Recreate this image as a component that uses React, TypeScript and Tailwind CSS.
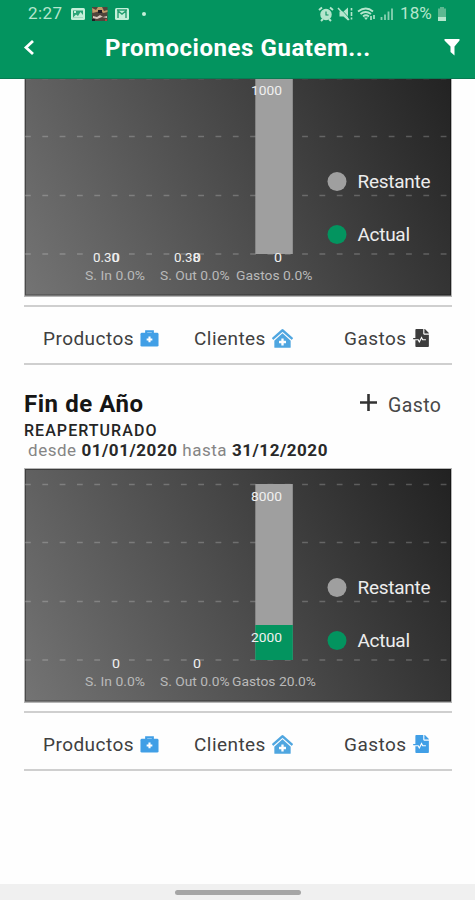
import * as React from "react"
import { FaClinicMedical, FaFileMedicalAlt } from "react-icons/fa"
import clsx from "clsx"

interface Label {
  text: string
  x: number
  y: number
  width: number
  axis?: boolean
}

interface ChartProps {
  id: string
  actualHeight: number
  labels: Label[]
}

const GRID_LINES = [16.5, 74.5, 133.5, 192]

const Chart = ({ id, actualHeight, labels }: ChartProps) => (
  <svg className="block h-[235px] w-[428px] shrink-0" viewBox="0 0 428 235">
    <defs>
      <linearGradient id={id} gradientUnits="userSpaceOnUse" x1="0" y1="235" x2="428" y2="0">
        <stop offset="0" stopColor="#747474" />
        <stop offset="1" stopColor="#212121" />
      </linearGradient>
    </defs>
    <rect width="428" height="235" fill="#b5b5b5" />
    <rect x="1" y="1" width="426" height="232.5" fill={`url(#${id})`} />
    <rect x="1.5" y="1.5" width="425" height="231.5" fill="none" stroke="#000000" strokeOpacity="0.35" />
    {GRID_LINES.map((y) => (
      <line key={y} x1="1" x2="426" y1={y} y2={y} stroke="#ffffff" strokeOpacity="0.22" strokeWidth="1.3" strokeDasharray="5.8 11.52" />
    ))}
    <rect x="231.3" y="16" width="37.5" height="176" fill="#9f9f9f" />
    <rect x="231.3" y={192 - actualHeight} width="37.5" height={actualHeight} fill="#03945f" />
    {labels.map((label, i) => (
      <text
        key={i}
        x={label.x}
        y={label.y}
        textLength={label.width}
        lengthAdjust="spacingAndGlyphs"
        className={label.axis ? "text-[12px]" : "text-[13.5px]"}
        fill={label.axis ? "#b9b9b9" : "#f0f0f0"}
      >
        {label.text}
      </text>
    ))}
    <circle cx="313" cy="119.5" r="9.5" fill="#9f9f9f" />
    <text x="333.5" y="125.5" textLength="73" className="text-[19px]" fill="#ededed">Restante</text>
    <circle cx="313" cy="172.5" r="9.5" fill="#03945f" />
    <text x="333.5" y="178.5" textLength="52.5" className="text-[19px]" fill="#ededed">Actual</text>
  </svg>
)

const MedicalBag = () => (
  <svg className="h-[19px] w-[19px]" viewBox="0 0 20 19">
    <path d="M6.500 5V2h7V5" fill="none" stroke="#419fe6" strokeWidth="2.200" />
    <rect x="0.500" y="3.500" width="19" height="14.500" rx="1.500" fill="#419fe6" />
    <path d="M10 7.500v6M7 10.500h6" stroke="#ffffff" strokeWidth="2.200" />
  </svg>
)

const Actions = ({ gastosActive = false }: { gastosActive?: boolean }) => (
  <div className="mt-[8px] flex h-[60px] items-center border-y-2 border-[#cfcfcf] pt-[6px] pl-[19px] text-[19px] leading-6 tracking-[0.45px] text-[#404040]">
    <div className="flex w-[151px] items-center">
      <span className="w-[97px] pt-px">Productos</span>
      <MedicalBag />
    </div>
    <div className="flex w-[150px] items-center">
      <span className="w-[78px] pt-px">Clientes</span>
      <FaClinicMedical className="h-[19px] w-[21px] text-[#4fa6e0]" />
    </div>
    <div className="flex items-center">
      <span className="w-[68px] pt-px">Gastos</span>
      <FaFileMedicalAlt className={clsx("size-[18px]", gastosActive ? "text-[#419fe6]" : "text-[#3d3d3d]")} />
    </div>
  </div>
)

const StatusBar = () => (
  <div className="flex h-[28px] items-center pl-[28px] text-[17px] text-[#b5e6cd]">
    <span className="w-[42px] tracking-[0.4px]">2:27</span>
    <svg className="h-[14px] w-[66px]" viewBox="0 0 66 14">
      <rect x="1" y="1" width="14" height="12" rx="1.5" fill="#c4efd9" />
      <path d="M3 3.5h10v7H3z" fill="#2aa377" />
      <path d="M3 10.5l3-3 2 1.5 2.5-4 2.5 3v2.5zM4 4h2v2H4z" fill="#c4efd9" />
      <rect x="22" width="15.5" height="14" fill="#51453c" />
      <path d="M22 1l4 2 2-3h4l2 4 3.5-1v2l-4 1-3-2-4 1-4 1z" fill="#c19b69" />
      <path d="M23 9l4 1 3-2 3 2 4-1v2l-5-1-5 2-4-1z" fill="#d7c8bd" />
      <path d="M28 3h4v3h-4zM22 12h3v2h-3z" fill="#201c24" />
      <path d="M35 12h2v2h-2z" fill="#b6413c" />
      <rect x="45" y="1" width="14" height="12" rx="1.5" fill="#c4efd9" />
      <path d="M48 11V4l4 3 4-3v7M47 3h10" fill="none" stroke="#249e70" strokeWidth="1.4" />
    </svg>
    <span className="ml-[6px] size-[4px] rounded-full bg-[#c4efd9]" />
    <svg className="ml-[172px] h-[16px] w-[78px]" viewBox="0 0 78 16" fill="none" stroke="#b5e6cd">
      <circle cx="8" cy="8.5" r="5" fill="#b5e6cd" strokeWidth="1.5" />
      <path d="M1 4l3-2.5M15 4l-3-2.5M3 15l2-2M13 15l-2-2" strokeWidth="2" />
      <path d="M8 5.500v3.500h2.500" stroke="#078f60" strokeWidth="1.1" />
      <path d="M21.500 5.500h4l4.500-4v13l-4.500-4h-4z" fill="#b5e6cd" stroke="none" />
      <path d="M22 2l10 11" stroke="#03945f" strokeWidth="0.8" />
      <path d="M20 2l11 12" strokeWidth="1.5" />
      <path d="M33.500 2v2.500M33.500 6v4M33.500 11.500v2" strokeWidth="1.6" />
      <path d="M40 5.500q8-6 15 0M42.500 8q5-4 10.500 0M45 10.500q3-2.500 6 0" strokeWidth="1.8" />
      <path d="M46 11.500h4l-2 2.500z" fill="#b5e6cd" stroke="none" />
      <path d="M53 14v-4M56 9v4" strokeWidth="1.6" />
      <path d="M63.500 14v-3M67 14V8.500M70.500 14V5.500M74 14V2.500" strokeWidth="1.8" strokeOpacity="0.75" />
    </svg>
    <span className="ml-[4px] w-[37px] tracking-[0.1px]">18%</span>
    <svg className="h-[14px] w-[10px]" viewBox="0 0 10 14">
      <path d="M3 0h4v1.500h2V14H1V1.500h2z" fill="#5db891" />
      <path d="M1 10h8v4H1z" fill="#b5e6cd" />
    </svg>
  </div>
)

const Header = () => (
  <header className="h-[79px] shrink-0 border-b border-[#087b52] bg-[#03945f]">
    <StatusBar />
    <div className="flex h-[39px] items-center pl-[23px] text-white">
      <svg className="h-[18px] w-[12px]" viewBox="0 0 12 18">
        <path d="M10 2L3 8.500l7 6.500" fill="none" stroke="currentColor" strokeWidth="2.800" />
      </svg>
      <h1 className="ml-[70px] w-[338px] pt-px text-[24px] font-bold tracking-[0.55px] whitespace-nowrap">Promociones Guatem...</h1>
      <svg className="h-[17px] w-[18px]" viewBox="0 0 18 17">
        <path d="M1.500 0h15v1.500l-5 6V16.500l-4-3.500V7.500l-6-6z" fill="currentColor" />
      </svg>
    </div>
  </header>
)

const firstLabels: Label[] = [
  { text: "0.30", x: 69, y: 200, width: 26 },
  { text: "0", x: 88, y: 200, width: 8 },
  { text: "0.38", x: 150, y: 200, width: 26 },
  { text: "0", x: 169, y: 200, width: 8 },
  { text: "1000", x: 227, y: 33, width: 31 },
  { text: "0", x: 250, y: 200, width: 8 },
  { text: "S. In 0.0%", x: 61, y: 217.5, width: 60, axis: true },
  { text: "S. Out 0.0%", x: 136, y: 217.5, width: 69.5, axis: true },
  { text: "Gastos 0.0%", x: 212, y: 217.5, width: 76.5, axis: true }
]

const secondLabels: Label[] = [
  { text: "0", x: 88, y: 200, width: 8 },
  { text: "0", x: 169, y: 200, width: 8 },
  { text: "8000", x: 227, y: 33, width: 31 },
  { text: "2000", x: 227, y: 173.5, width: 31 },
  { text: "S. In 0.0%", x: 61, y: 217.5, width: 60, axis: true },
  { text: "S. Out 0.0%", x: 136, y: 217.5, width: 69.5, axis: true },
  { text: "Gastos 20.0%", x: 208, y: 217.5, width: 84, axis: true }
]

export default function App() {
  return (
    <div className="flex h-[900px] w-[475px] flex-col overflow-hidden bg-[#fefefe] font-['Roboto',sans-serif]">
      <Header />
      <main className="flex-1 overflow-hidden pl-[24px]">
        {/* Scrolled partly under the header */}
        <section className="-mt-[17px] w-[428px]">
          <Chart id="first" actualHeight={0} labels={firstLabels} />
          <Actions />
        </section>

        <section className="w-[428px]">
          <div className="flex h-[56px] items-end justify-between pr-[10px]">
            <h2 className="text-[24px] leading-[34px] font-bold tracking-[0.55px] text-[#151515]">Fin de Año</h2>
            <div className="flex items-center">
              <svg className="mb-[7px] size-[17px]" viewBox="0 0 17 17">
                <path d="M8.500 0v17M0 8.500h17" stroke="#333333" strokeWidth="2.600" />
              </svg>
              <span className="ml-[11px] w-[54px] text-[19.5px] leading-[30px] tracking-[0.4px] text-[#484848]">Gasto</span>
            </div>
          </div>
          <p className="text-[16px] leading-[20px] font-medium tracking-[1.050px] text-[#252525]">REAPERTURADO</p>
          <p className="h-[27px] pl-[4px] text-[17px] leading-[19px] tracking-[0.54px] whitespace-nowrap text-[#858585]">
            desde <b className="text-[#292929]">01/01/2020</b> hasta <b className="text-[#292929]">31/12/2020</b>
          </p>
          <Chart id="second" actualHeight={35} labels={secondLabels} />
          <Actions gastosActive />
        </section>
      </main>
      <footer className="flex h-[16px] shrink-0 justify-center bg-[#f0f0f0] pt-[6px]">
        <div className="h-[5px] w-[126px] rounded-full bg-[#a5a5a5]" />
      </footer>
    </div>
  )
}
